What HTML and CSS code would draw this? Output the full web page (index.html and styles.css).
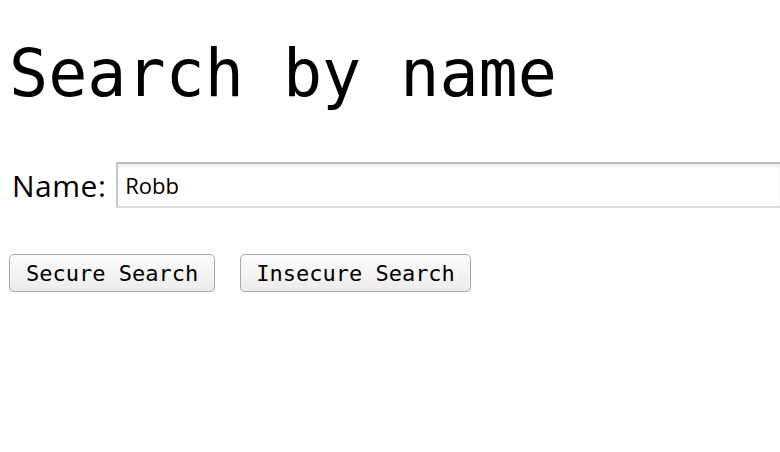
FILE: index.html
```html
<!DOCTYPE html>
<html>
<head>
<meta charset="utf-8">
<link rel="stylesheet" href="styles.css">
</head>
<body>
<h1 class="title">Search by name</h1>
<form class="search-form">
  <div class="field-row">
    <label class="name-label" for="name">Name:</label>
    <input class="name-input" id="name" type="text" value="Robb">
  </div>
  <div class="button-row">
    <button class="btn btn-secure" type="button">Secure Search</button>
    <button class="btn btn-insecure" type="button">Insecure Search</button>
  </div>
</form>
</body>
</html>
```
FILE: styles.css
```css
html, body {
  margin: 0;
  padding: 0;
  background: #fff;
  overflow: hidden;
}
body {
  padding: 0 0 0 9px;
  color: #000;
}
.title {
  margin: 0;
  padding-top: 36px;
  font-family: "DejaVu Sans Mono", monospace;
  font-weight: normal;
  font-size: 65px;
  line-height: 76px;
}
.search-form {
  margin: 0;
}
.field-row {
  display: flex;
  align-items: center;
  margin-top: 50px;
  gap: 10px;
}
.name-label {
  font-family: "Open Sans", sans-serif;
  font-size: 30px;
  letter-spacing: 0.5px;
  padding-left: 3px;
}
.name-input {
  flex: 1;
  min-width: 0;
  height: 46px;
  box-sizing: border-box;
  border: 2px solid #c8c8c8;
  border-right: none;
  border-bottom-color: #dcdcdc;
  border-top-color: #bdbdbd;
  box-shadow: inset 0 2px 3px rgba(0,0,0,0.08);
  padding: 0 7px;
  font-family: "Open Sans", sans-serif;
  font-size: 22px;
  color: #000;
  outline: none;
}
.button-row {
  display: flex;
  gap: 25px;
  margin-top: 46px;
}
.btn {
  height: 38px;
  box-sizing: border-box;
  border: 1px solid #a8a8a8;
  border-radius: 5px;
  background: linear-gradient(#fcfcfc, #ececec);
  box-shadow: 0 1px 1px rgba(0,0,0,0.12);
  font-family: "DejaVu Sans Mono", monospace;
  font-size: 22px;
  color: #000;
}
.btn-secure {
  padding: 0 16px;
}
.btn-insecure {
  padding: 0 15px;
}
```
